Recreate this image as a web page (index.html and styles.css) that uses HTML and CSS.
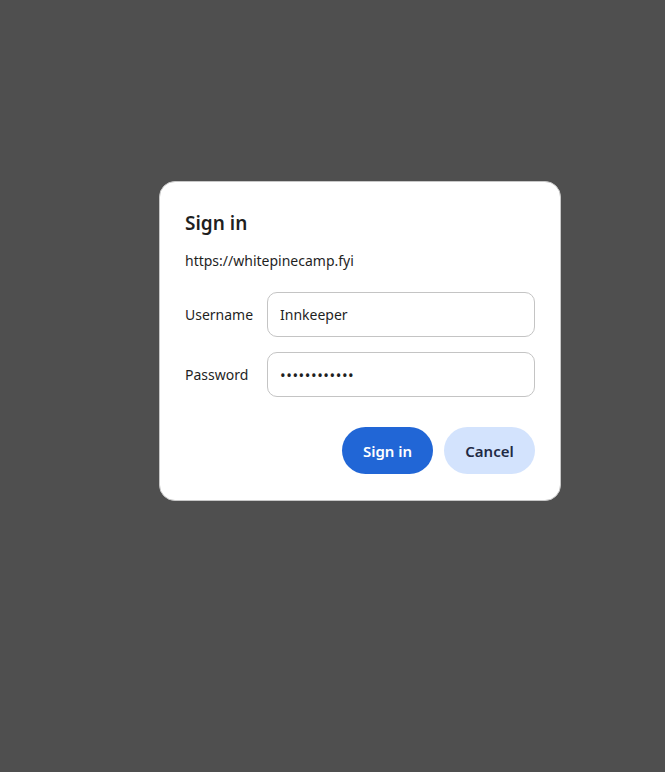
FILE: index.html
```html
<!DOCTYPE html>
<html>
	<head>
		<meta charset="UTF-8">
		<title>Sign in</title>
		<link rel="stylesheet" href="styles.css">
	</head>
	<body>
		<div id="page">
			<div id="dialog">
				<div class="title">Sign in</div>
				<div class="origin">https://whitepinecamp.fyi</div>
				<div class="row">
					<label for="user">Username</label>
					<input id="user" class="field" type="text" value="Innkeeper">
				</div>
				<div class="row">
					<label for="pass">Password</label>
					<input id="pass" class="field password" type="password" value="abcdefghijkl">
				</div>
				<div class="buttons">
					<button class="btn primary">Sign in</button>
					<button class="btn secondary">Cancel</button>
				</div>
			</div>
		</div>
	</body>
</html>
```

FILE: styles.css
```css
body {
	margin: 0;
	background-color: #4f4f4f;
	font-family: "Noto Sans", "Open Sans", sans-serif;
	color: #1f1f1f;
}
#page {
	padding-top: 181px;
	padding-left: 159px;
}
#dialog {
	width: 350px;
	padding: 29px 25px 26px 25px;
	background-color: #ffffff;
	border: 1px solid #c7c7c7;
	border-radius: 16px;
}
.title {
	font-size: 19px;
	font-weight: 600;
	line-height: 24px;
	margin-bottom: 16px;
}
.origin {
	font-size: 14px;
	line-height: 20px;
	margin-bottom: 21px;
}
.row {
	display: flex;
	align-items: center;
	margin-bottom: 15px;
}
.row label {
	width: 82px;
	font-size: 14px;
}
.field {
	flex: 1;
	height: 45px;
	box-sizing: border-box;
	border: 1px solid #c4c4c4;
	border-radius: 10px;
	padding: 0 12px;
	font-family: inherit;
	font-size: 14px;
	color: #1f1f1f;
	outline: none;
}
.password {
	letter-spacing: 0.55px;
	font-size: 15px;
}
.buttons {
	display: flex;
	justify-content: flex-end;
	gap: 11px;
	margin-top: 30px;
}
.btn {
	width: 91px;
	height: 47px;
	border: none;
	border-radius: 24px;
	font-family: inherit;
	font-size: 15px;
	font-weight: 600;
}
.primary {
	background-color: #2166d6;
	color: #ffffff;
}
.secondary {
	background-color: #d3e3fd;
	color: #1f2a44;
}
```
